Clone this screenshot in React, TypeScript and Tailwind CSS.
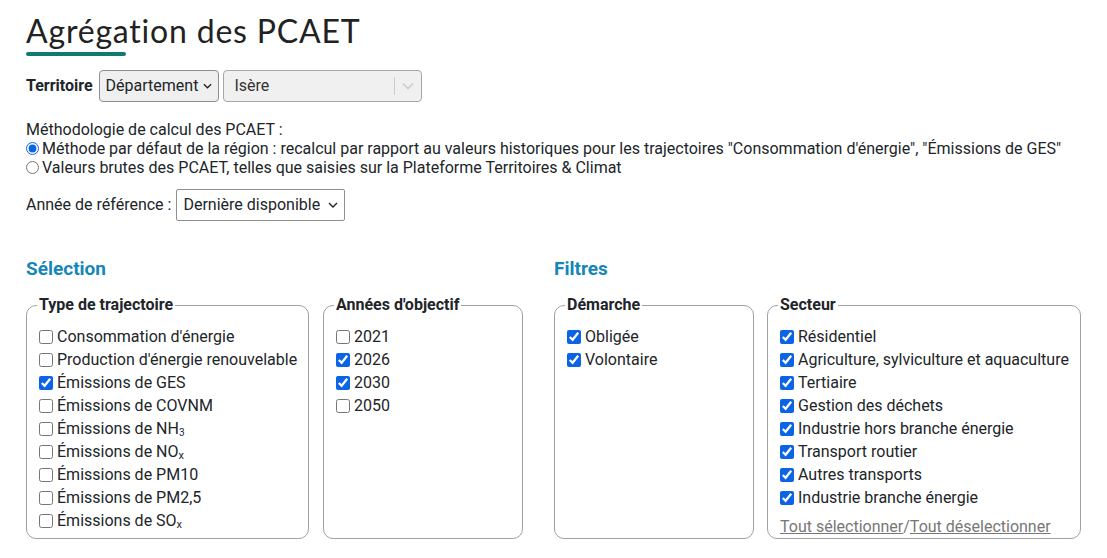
import { useState } from "react";

function Box({ label, checked }: { label: React.ReactNode; checked?: boolean }) {
  const [on, setOn] = useState(!!checked);
  return (
    <label className="flex items-center h-[23px] leading-none">
      <input type="checkbox" checked={on} onChange={() => setOn(!on)} className="w-[14px] h-[14px] m-0 mr-[4px] accent-[#0b63e5]" />
      <span>{label}</span>
    </label>
  );
}

function Fieldset({ legend, className, children }: { legend: string; className: string; children: React.ReactNode }) {
  return (
    <fieldset className={`border border-[#a0a0a0] rounded-[10px] pl-[12px] pr-2 pt-[8px] pb-[6px] ${className}`}>
      <legend className="font-bold px-[2px] -ml-[2px]">{legend}</legend>
      {children}
    </fieldset>
  );
}

export default function App() {
  const secteurs = [
    "Résidentiel",
    "Agriculture, sylviculture et aquaculture",
    "Tertiaire",
    "Gestion des déchets",
    "Industrie hors branche énergie",
    "Transport routier",
    "Autres transports",
    "Industrie branche énergie",
  ];
  return (
    <div className="pl-[26px] pt-[12px] text-[16px] text-[#212529]" style={{ fontFamily: "Roboto, 'Liberation Sans', sans-serif" }}>
      <h1 className="text-[32px] leading-[38px] text-[#222] tracking-[0.8px]" style={{ fontFamily: "Lato, sans-serif", fontWeight: 400 }}>
        Agrégation des PCAET
      </h1>
      <div className="w-[100px] h-[4px] rounded-full bg-[#0f7a72] mt-[2px]" />

      <div className="flex items-center mt-[14px] gap-[4px]">
        <span className="font-bold mr-[2px]">Territoire</span>
        <div className="h-[32px] px-[6px] flex items-center gap-[5px] border border-[#8f8f8f] rounded-[4px] bg-[#efefef]">
          Département
          <svg width="9" height="6" viewBox="0 0 10 6"><path d="M1 1l4 4 4-4" fill="none" stroke="#222" strokeWidth="1.4" /></svg>
        </div>
        <div className="h-[32px] w-[199px] pl-[10px] flex items-center justify-between border border-[#a8a8a8] rounded-[4px] bg-[#f0f0f0] text-[#333]">
          Isère
          <div className="flex items-center h-full">
            <div className="w-px h-[18px] bg-[#ccc]" />
            <svg className="mx-[7px]" width="12" height="8" viewBox="0 0 12 8"><path d="M1 1.5l5 5 5-5" fill="none" stroke="#ccc" strokeWidth="1.6" /></svg>
          </div>
        </div>
      </div>

      <div className="mt-[18px] leading-[19px]">
        <div>Méthodologie de calcul des PCAET :</div>
        <label className="flex items-center gap-[3px]">
          <input type="radio" name="m" defaultChecked className="m-0 w-[13px] h-[13px] accent-[#0b63e5]" />
          Méthode par défaut de la région : recalcul par rapport au valeurs historiques pour les trajectoires "Consommation d'énergie", "Émissions de GES"
        </label>
        <label className="flex items-center gap-[3px]">
          <input type="radio" name="m" className="m-0 w-[13px] h-[13px]" />
          Valeurs brutes des PCAET, telles que saisies sur la Plateforme Territoires &amp; Climat
        </label>
      </div>

      <div className="flex items-center mt-[12px] gap-[5px]">
        <span>Année de référence :</span>
        <div className="h-[32px] px-[6px] flex items-center gap-[8px] border border-[#8f8f8f] rounded-[2px] bg-white">
          Dernière disponible
          <svg width="10" height="6" viewBox="0 0 10 6"><path d="M1 1l4 4 4-4" fill="none" stroke="#222" strokeWidth="1.4" /></svg>
        </div>
      </div>

      <div className="flex mt-[36px]">
        <div className="w-[528px]">
          <h2 className="text-[19px] font-bold text-[#1486b8] leading-[24px]">Sélection</h2>
          <div className="flex gap-[14px] mt-[12px]">
            <Fieldset legend="Type de trajectoire" className="w-[283px] h-[246px]">
              <Box label="Consommation d'énergie" />
              <Box label="Production d'énergie renouvelable" />
              <Box label="Émissions de GES" checked />
              <Box label="Émissions de COVNM" />
              <Box label={<>Émissions de NH<sub className="text-[10px]">3</sub></>} />
              <Box label={<>Émissions de NO<sub className="text-[11px]">x</sub></>} />
              <Box label="Émissions de PM10" />
              <Box label="Émissions de PM2,5" />
              <Box label={<>Émissions de SO<sub className="text-[11px]">x</sub></>} />
            </Fieldset>
            <Fieldset legend="Années d'objectif" className="w-[200px] h-[246px]">
              <Box label="2021" />
              <Box label="2026" checked />
              <Box label="2030" checked />
              <Box label="2050" />
            </Fieldset>
          </div>
        </div>
        <div>
          <h2 className="text-[19px] font-bold text-[#1486b8] leading-[24px]">Filtres</h2>
          <div className="flex gap-[13px] mt-[12px]">
            <Fieldset legend="Démarche" className="w-[200px] h-[246px]">
              <Box label="Obligée" checked />
              <Box label="Volontaire" checked />
            </Fieldset>
            <Fieldset legend="Secteur" className="w-[314px] h-[246px]">
              {secteurs.map((s) => <Box key={s} label={s} checked />)}
              <div className="mt-[6px] text-[#777]">
                <span className="underline">Tout sélectionner</span>/<span className="underline">Tout déselectionner</span>
              </div>
            </Fieldset>
          </div>
        </div>
      </div>
    </div>
  );
}
